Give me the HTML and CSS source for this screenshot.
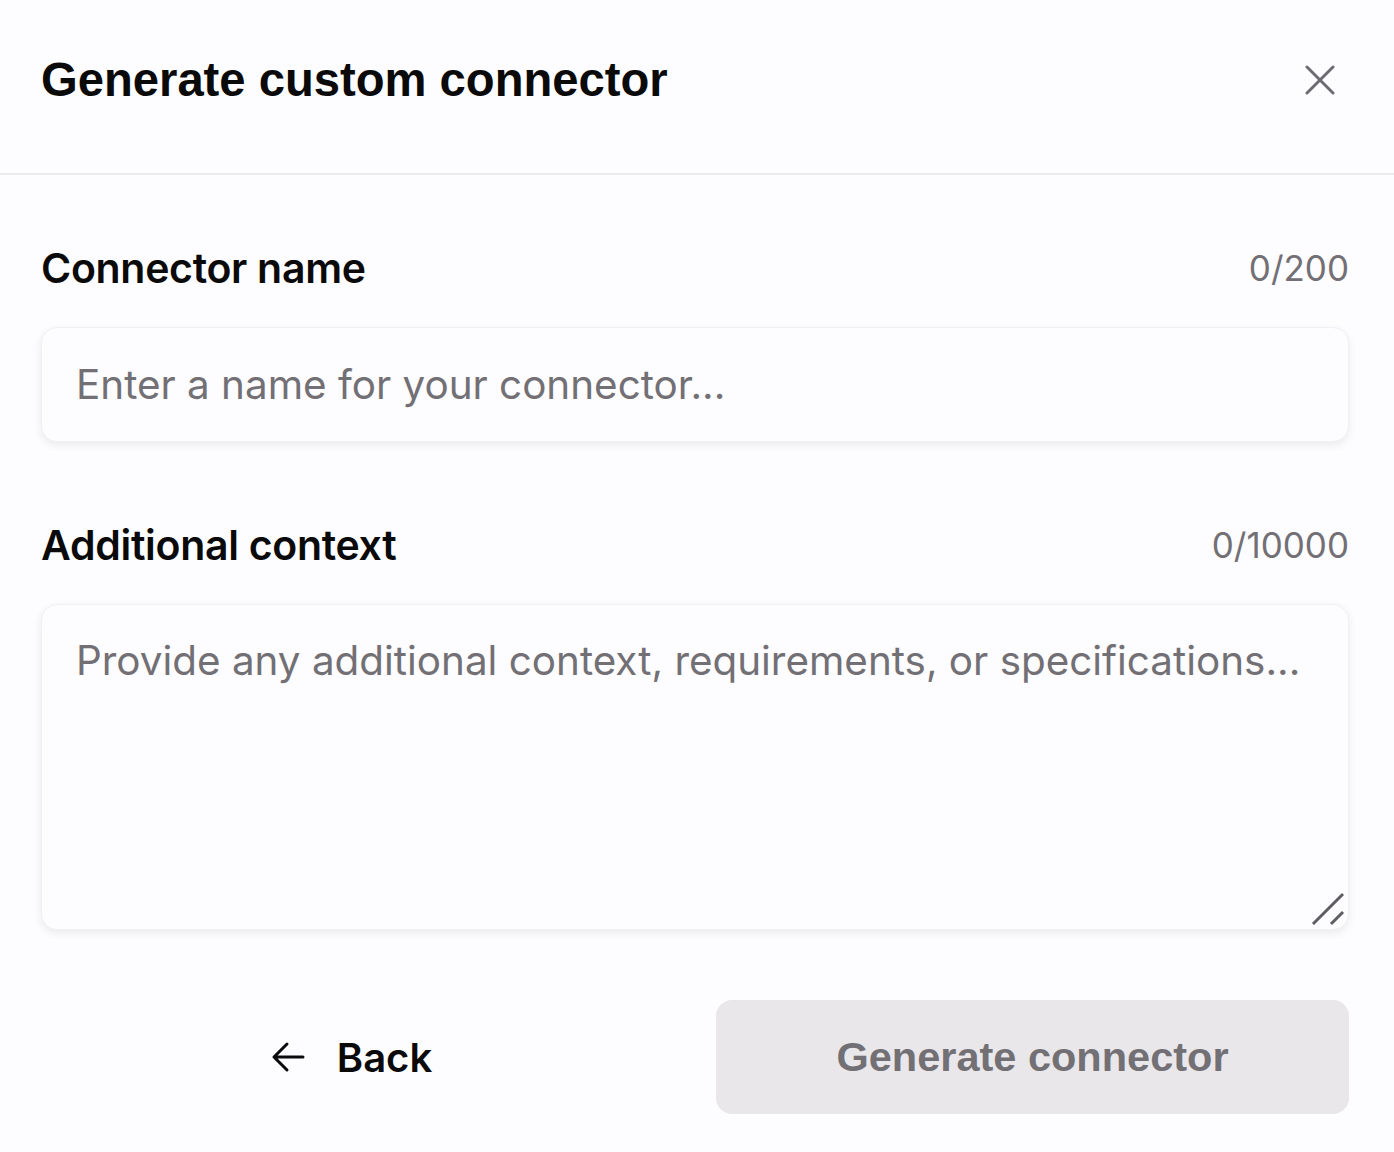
FILE: index.html
```html
<!DOCTYPE html>
<html lang="en">
<head>
    <meta charset="UTF-8">
    <meta name="viewport" content="width=device-width, initial-scale=1.0">
    <title>Generate custom connector</title>
    <link rel="stylesheet" href="styles.css">
</head>
<body>
    <div class="dialog">
        <header class="dialog-header">
            <h1>Generate custom connector</h1>
            <button class="close-btn" aria-label="Close">
                <svg width="30" height="30" viewBox="0 0 30 30" fill="none" stroke="currentColor" stroke-width="3" stroke-linecap="round">
                    <path d="M2 2 L28 28 M28 2 L2 28"/>
                </svg>
            </button>
        </header>

        <div class="dialog-body">
            <div class="field">
                <div class="field-head">
                    <label for="connectorName">Connector name</label>
                    <span class="counter">0/200</span>
                </div>
                <input id="connectorName" class="input" type="text" placeholder="Enter a name for your connector...">
            </div>

            <div class="field">
                <div class="field-head">
                    <label for="context">Additional context</label>
                    <span class="counter">0/10000</span>
                </div>
                <div class="textarea-wrap">
                    <textarea id="context" class="input textarea" placeholder="Provide any additional context, requirements, or specifications..."></textarea>
                    <!-- resize grip -->
                    <svg class="grip" width="34" height="34" viewBox="0 0 34 34" fill="none" stroke="#5f5d62" stroke-width="3">
                        <path d="M2 32 L32 2 M20 32 L32 20"/>
                    </svg>
                </div>
            </div>

            <div class="actions">
                <button class="back-btn">
                    <svg width="34" height="32" viewBox="0 0 34 32" fill="none" stroke="currentColor" stroke-width="3" stroke-linecap="round" stroke-linejoin="round">
                        <path d="M32 16 H3 M16 3 L3 16 L16 29"/>
                    </svg>
                    <span>Back</span>
                </button>
                <button class="primary-btn" disabled>Generate connector</button>
            </div>
        </div>
    </div>
</body>
</html>
```

FILE: styles.css
```css
:root {
    --bg: #fdfcfe;
    --text: #0a0a0b;
    --muted: #727075;
    --border: #ebeaec;
    --disabled: #e9e7ea;
}

* {
    box-sizing: border-box;
    margin: 0;
    padding: 0;
}

body {
    min-height: 100vh;
    background: var(--bg);
    color: var(--text);
    font-family: 'Inter', 'Noto Sans', sans-serif;
}

.dialog-header {
    height: 175px;
    display: flex;
    align-items: center;
    justify-content: space-between;
    padding: 0 59px 14px 41px;
    border-bottom: 2px solid var(--border);
}

.dialog-header h1 {
    font-family: 'Liberation Sans', Arial, sans-serif;
    font-size: 47.2px;
    font-weight: 700;
}

.close-btn {
    background: none;
    border: none;
    color: #6d6b70;
    display: flex;
    cursor: pointer;
}

.dialog-body {
    padding: 69px 45px 0 41px;
}

.field {
    margin-bottom: 79px;
}

.field:nth-child(2) {
    margin-bottom: 70px;
}

.field-head {
    display: flex;
    align-items: center;
    justify-content: space-between;
    height: 48px;
    margin-bottom: 35px;
}

.field-head label {
    font-size: 41px;
    font-weight: 600;
    letter-spacing: -0.3px;
}

.counter {
    font-size: 35px;
    color: var(--muted);
}

.input {
    display: block;
    width: 100%;
    height: 115px;
    padding: 0 34px;
    border: 1px solid #f1f0f2;
    border-radius: 16px;
    background: var(--bg);
    box-shadow: 0 3px 8px rgba(0, 0, 0, 0.08);
    font-family: inherit;
    font-size: 40.4px;
    color: var(--text);
    outline: none;
}

.input::placeholder {
    color: var(--muted);
}

.textarea-wrap {
    position: relative;
}

.textarea {
    height: 326px;
    padding: 32px 34px;
    line-height: 48px;
    resize: none;
}

.grip {
    position: absolute;
    right: 4px;
    bottom: 4px;
}

.actions {
    display: grid;
    grid-template-columns: 1fr 1fr;
    gap: 42px;
}

.back-btn {
    display: flex;
    align-items: center;
    justify-content: center;
    gap: 32px;
    height: 114px;
    padding-right: 12px;
    background: none;
    border: none;
    color: var(--text);
    font-family: inherit;
    font-size: 40px;
    font-weight: 600;
    cursor: pointer;
}

.primary-btn {
    height: 114px;
    border: none;
    border-radius: 16px;
    background: var(--disabled);
    color: var(--muted);
    font-family: 'Liberation Sans', Arial, sans-serif;
    font-size: 41.5px;
    font-weight: 700;
}
```
